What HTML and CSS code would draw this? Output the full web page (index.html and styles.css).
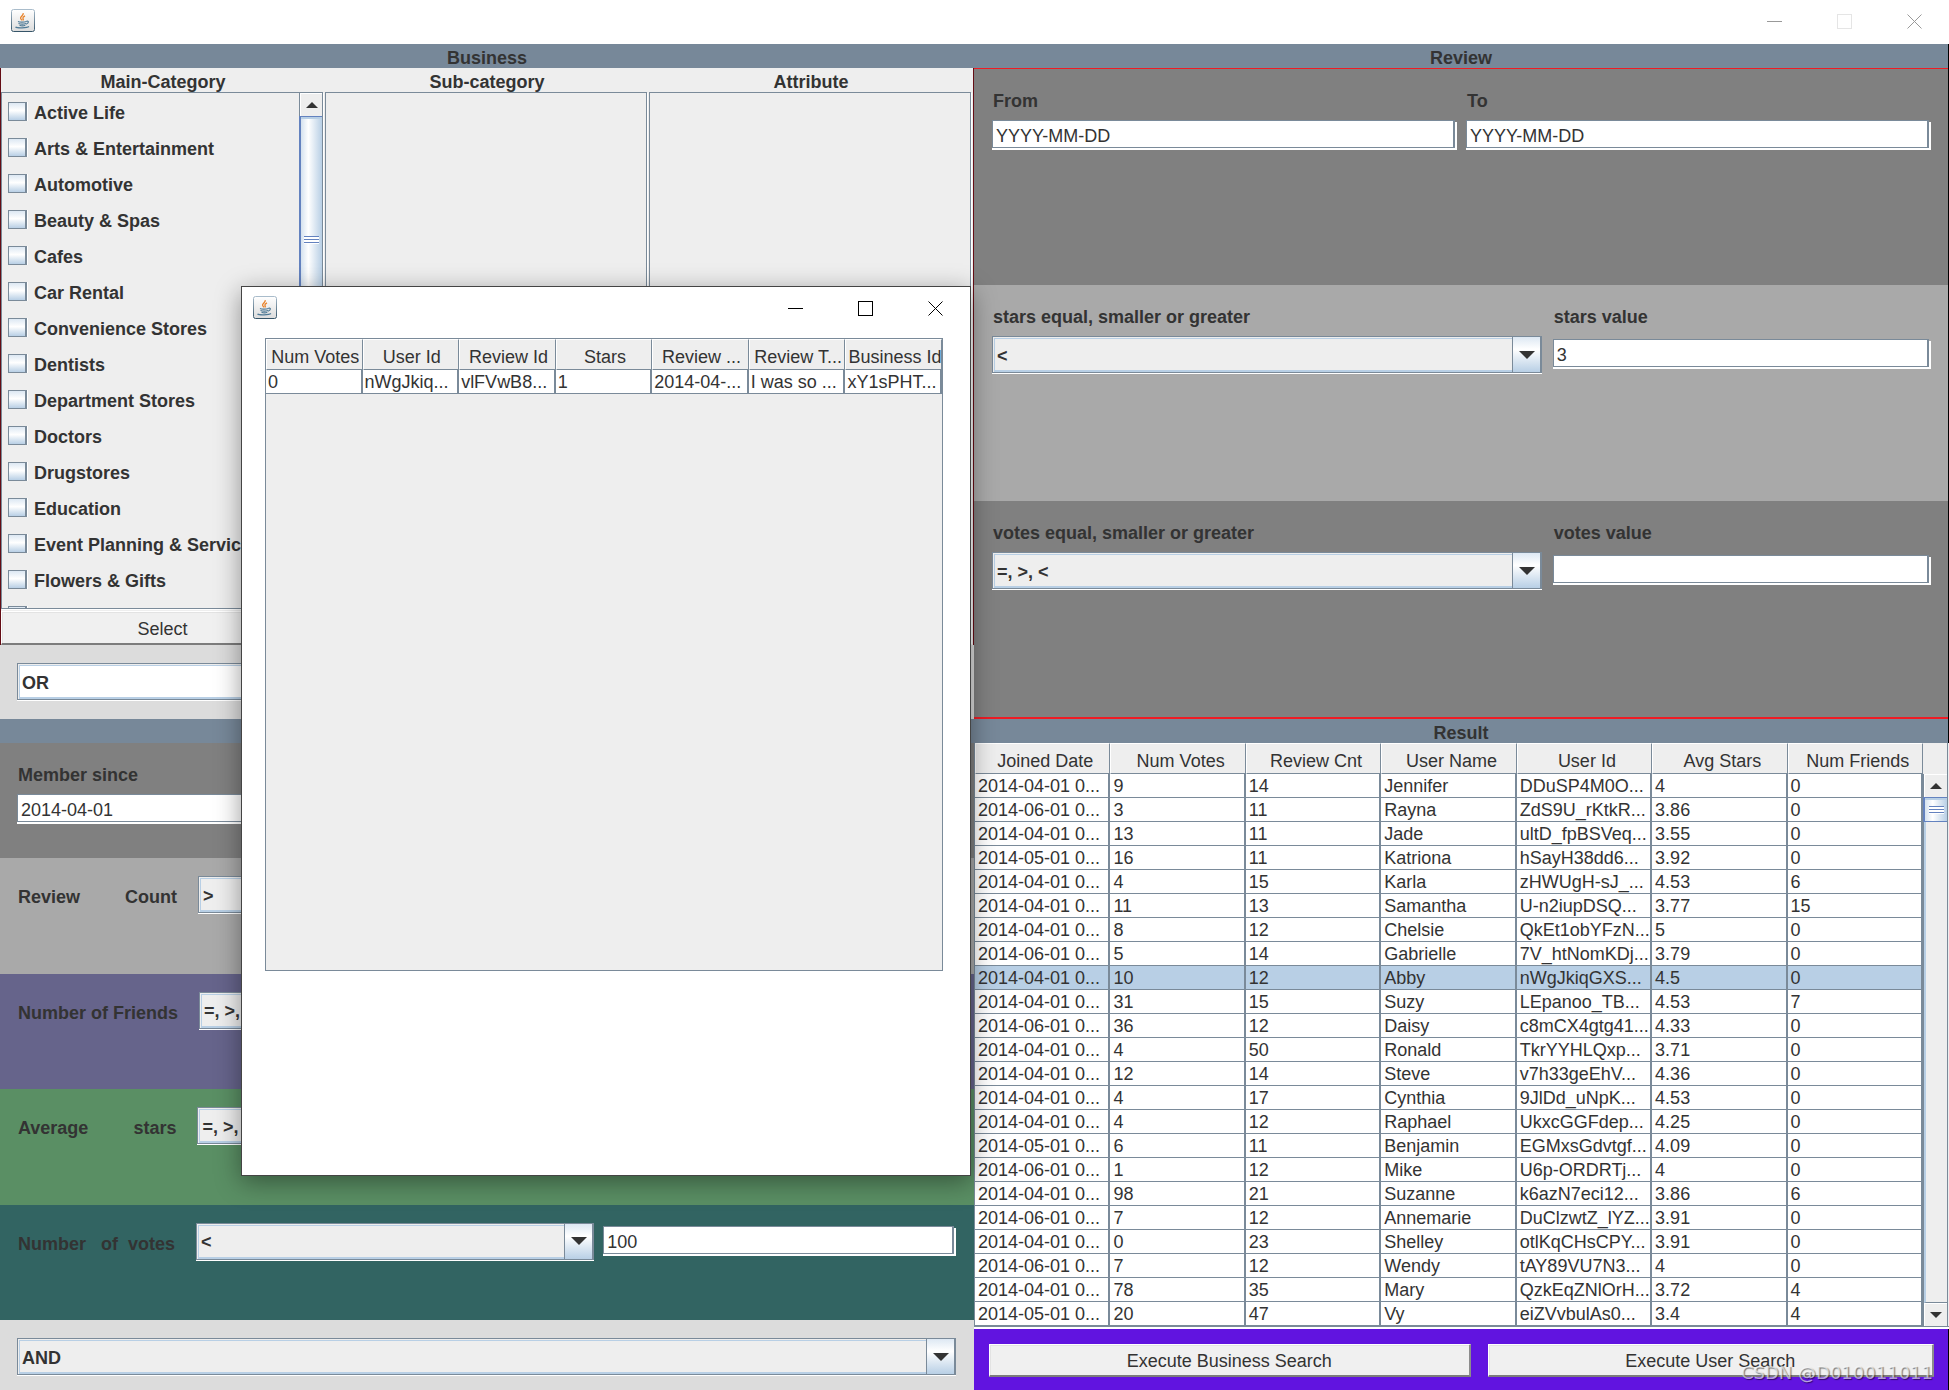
FILE: index.html
```html
<!DOCTYPE html>
<html lang="en">
<head>
<meta charset="utf-8">
<title>Search</title>
<link rel="stylesheet" href="styles.css">
</head>
<body>
<svg width="0" height="0" class="defs" aria-hidden="true">
  <defs>
    <linearGradient id="jbg" x1="0" y1="0" x2="0" y2="1"><stop offset="0" stop-color="#ffffff"/><stop offset="1" stop-color="#dcdcdc"/></linearGradient>
    <linearGradient id="jedge" x1="0" y1="0" x2="0" y2="1"><stop offset="0" stop-color="#a9bccb"/><stop offset="1" stop-color="#365569"/></linearGradient>
    <symbol id="java" viewBox="0 0 24 24">
      <rect x="0.5" y="0.5" width="23" height="22" rx="2" fill="url(#jbg)" stroke="url(#jedge)"/>
      <path d="M12.200 4.200c.5 2.400-3 3-2.600 5 .1.9 1 1.500 1.600 2.200M14 6.800c-1.600.8-2.400 1.500-2.100 2.400.2.7.9 1 .1 2.200" fill="none" stroke="#e8822a" stroke-width="1.300"/>
      <path d="M7 12.500c1.500.9 6 .9 8.500 0M7.500 14.500c2 .7 5.500.7 7.500 0M8.500 16.200c2 .8 4 .8 5.800 0M15.500 12.300c2.400-.9 2.800 1.600-.6 2.900M4.500 18c1.500 1.200 11.500 1.200 13.500-.5" fill="none" stroke="#4f7a96" stroke-width="1.200"/>
    </symbol>
    <symbol id="min" viewBox="0 0 15 15"><path d="M0 7.500h15" stroke="currentColor"/></symbol>
    <symbol id="max" viewBox="0 0 15 15"><rect x=".5" y=".5" width="14" height="14" fill="none" stroke="currentColor"/></symbol>
    <symbol id="close" viewBox="0 0 15 15"><path d="M.5.5l14 14M14.500.5l-14 14" stroke="currentColor"/></symbol>
  </defs>
</svg>
<div class="app">
  <header class="titlebar">
    <svg class="logo" aria-hidden="true"><use href="#java"/></svg>
    <div class="controls inactive">
      <button type="button" aria-label="Minimize"><svg><use href="#min"/></svg></button>
      <button type="button" aria-label="Maximize" disabled><svg><use href="#max"/></svg></button>
      <button type="button" aria-label="Close"><svg><use href="#close"/></svg></button>
    </div>
  </header>

  <main class="panels">
    <section class="panel">
      <h2 class="bar">Business</h2>
      <div class="categories">
        <div class="category">
          <h3 class="heading">Main-Category</h3>
          <div class="pane">
            <ul class="checks">
              <li><label><input type="checkbox"><span>Active Life</span></label></li>
              <li><label><input type="checkbox"><span>Arts &amp; Entertainment</span></label></li>
              <li><label><input type="checkbox"><span>Automotive</span></label></li>
              <li><label><input type="checkbox"><span>Beauty &amp; Spas</span></label></li>
              <li><label><input type="checkbox"><span>Cafes</span></label></li>
              <li><label><input type="checkbox"><span>Car Rental</span></label></li>
              <li><label><input type="checkbox"><span>Convenience Stores</span></label></li>
              <li><label><input type="checkbox"><span>Dentists</span></label></li>
              <li><label><input type="checkbox"><span>Department Stores</span></label></li>
              <li><label><input type="checkbox"><span>Doctors</span></label></li>
              <li><label><input type="checkbox"><span>Drugstores</span></label></li>
              <li><label><input type="checkbox"><span>Education</span></label></li>
              <li><label><input type="checkbox"><span>Event Planning &amp; Services</span></label></li>
              <li><label><input type="checkbox"><span>Flowers &amp; Gifts</span></label></li>
              <li><label><input type="checkbox" aria-label="Next category"></label></li>
            </ul>
            <div class="scrollbar">
              <span class="arrow up"></span>
              <span class="thumb long"><i class="grip"></i></span>
              <span class="track"></span>
              <span class="arrow down"></span>
            </div>
          </div>
          <button type="button" class="button">Select</button>
        </div>
        <div class="category"><h3 class="heading">Sub-category</h3><div class="pane"></div></div>
        <div class="category"><h3 class="heading">Attribute</h3><div class="pane"></div></div>
      </div>
      <div class="mode tall">
        <span class="combo"><select class="white" aria-label="Category match"><option>OR</option><option>AND</option></select></span>
      </div>
    </section>

    <section class="panel framed">
      <h2 class="bar">Review</h2>
      <div class="review">
        <div class="criteria gray halves">
          <div class="field"><label for="from">From</label><input class="text" id="from" value="YYYY-MM-DD"></div>
          <div class="field"><label for="to">To</label><input class="text" id="to" value="YYYY-MM-DD"></div>
        </div>
        <div class="criteria silver">
          <div class="field"><label for="sop">stars equal, smaller or greater</label><span class="combo"><select id="sop"><option>&lt;</option></select></span></div>
          <div class="field"><label for="sval">stars value</label><div class="center"><input class="text" id="sval" value="3"></div></div>
        </div>
        <div class="criteria gray">
          <div class="field"><label for="vop">votes equal, smaller or greater</label><span class="combo"><select id="vop"><option>=, &gt;, &lt;</option></select></span></div>
          <div class="field"><label for="vval">votes value</label><div class="center"><input class="text" id="vval" value=""></div></div>
        </div>
      </div>
    </section>

    <section class="panel">
      <h2 class="bar">User</h2>
      <div class="filters">
        <div class="member gray">
          <div class="field"><label for="since">Member since</label><input class="text" id="since" value="2014-04-01"></div>
        </div>
        <div class="filter silver">
          <label for="rc">Review         Count</label><span class="combo"><select id="rc"><option>&gt;</option></select></span><input class="text" aria-label="Review count value">
        </div>
        <div class="filter violet">
          <label for="nf">Number of Friends</label><span class="combo"><select id="nf"><option>=, &gt;, &lt;</option></select></span><input class="text" aria-label="Friends value">
        </div>
        <div class="filter green">
          <label for="as">Average         stars</label><span class="combo"><select id="as"><option>=, &gt;, &lt;</option></select></span><input class="text" aria-label="Stars value">
        </div>
        <div class="filter teal">
          <label for="nv">Number   of  votes</label><span class="combo"><select id="nv"><option>&lt;</option></select></span><input class="text" aria-label="Votes value" value="100">
        </div>
      </div>
      <div class="mode">
        <span class="combo"><select aria-label="Filter match"><option>AND</option><option>OR</option></select></span>
      </div>
    </section>

    <section class="panel framed">
      <h2 class="bar">Result</h2>
      <div class="result">
        <table class="grid">
          <thead><tr><th>Joined Date</th><th>Num Votes</th><th>Review Cnt</th><th>User Name</th><th>User Id</th><th>Avg Stars</th><th>Num Friends</th></tr></thead>
          <tbody>
            <tr><td>2014-04-01 0...</td><td>9</td><td>14</td><td>Jennifer</td><td>DDuSP4M0O...</td><td>4</td><td>0</td></tr>
            <tr><td>2014-06-01 0...</td><td>3</td><td>11</td><td>Rayna</td><td>ZdS9U_rKtkR...</td><td>3.86</td><td>0</td></tr>
            <tr><td>2014-04-01 0...</td><td>13</td><td>11</td><td>Jade</td><td>ultD_fpBSVeq...</td><td>3.55</td><td>0</td></tr>
            <tr><td>2014-05-01 0...</td><td>16</td><td>11</td><td>Katriona</td><td>hSayH38dd6...</td><td>3.92</td><td>0</td></tr>
            <tr><td>2014-04-01 0...</td><td>4</td><td>15</td><td>Karla</td><td>zHWUgH-sJ_...</td><td>4.53</td><td>6</td></tr>
            <tr><td>2014-04-01 0...</td><td>11</td><td>13</td><td>Samantha</td><td>U-n2iupDSQ...</td><td>3.77</td><td>15</td></tr>
            <tr><td>2014-04-01 0...</td><td>8</td><td>12</td><td>Chelsie</td><td>QkEt1obYFzN...</td><td>5</td><td>0</td></tr>
            <tr><td>2014-06-01 0...</td><td>5</td><td>14</td><td>Gabrielle</td><td>7V_htNomKDj...</td><td>3.79</td><td>0</td></tr>
            <tr class="selected"><td>2014-04-01 0...</td><td>10</td><td>12</td><td>Abby</td><td>nWgJkiqGXS...</td><td>4.5</td><td>0</td></tr>
            <tr><td>2014-04-01 0...</td><td>31</td><td>15</td><td>Suzy</td><td>LEpanoo_TB...</td><td>4.53</td><td>7</td></tr>
            <tr><td>2014-06-01 0...</td><td>36</td><td>12</td><td>Daisy</td><td>c8mCX4gtg41...</td><td>4.33</td><td>0</td></tr>
            <tr><td>2014-04-01 0...</td><td>4</td><td>50</td><td>Ronald</td><td>TkrYYHLQxp...</td><td>3.71</td><td>0</td></tr>
            <tr><td>2014-04-01 0...</td><td>12</td><td>14</td><td>Steve</td><td>v7h33geEhV...</td><td>4.36</td><td>0</td></tr>
            <tr><td>2014-04-01 0...</td><td>4</td><td>17</td><td>Cynthia</td><td>9JlDd_uNpK...</td><td>4.53</td><td>0</td></tr>
            <tr><td>2014-04-01 0...</td><td>4</td><td>12</td><td>Raphael</td><td>UkxcGGFdep...</td><td>4.25</td><td>0</td></tr>
            <tr><td>2014-05-01 0...</td><td>6</td><td>11</td><td>Benjamin</td><td>EGMxsGdvtgf...</td><td>4.09</td><td>0</td></tr>
            <tr><td>2014-06-01 0...</td><td>1</td><td>12</td><td>Mike</td><td>U6p-ORDRTj...</td><td>4</td><td>0</td></tr>
            <tr><td>2014-04-01 0...</td><td>98</td><td>21</td><td>Suzanne</td><td>k6azN7eci12...</td><td>3.86</td><td>6</td></tr>
            <tr><td>2014-06-01 0...</td><td>7</td><td>12</td><td>Annemarie</td><td>DuClzwtZ_lYZ...</td><td>3.91</td><td>0</td></tr>
            <tr><td>2014-04-01 0...</td><td>0</td><td>23</td><td>Shelley</td><td>otlKqCHsCPY...</td><td>3.91</td><td>0</td></tr>
            <tr><td>2014-06-01 0...</td><td>7</td><td>12</td><td>Wendy</td><td>tAY89VU7N3...</td><td>4</td><td>0</td></tr>
            <tr><td>2014-04-01 0...</td><td>78</td><td>35</td><td>Mary</td><td>QzkEqZNlOrH...</td><td>3.72</td><td>4</td></tr>
            <tr><td>2014-05-01 0...</td><td>20</td><td>47</td><td>Vy</td><td>eiZVvbulAs0...</td><td>3.4</td><td>4</td></tr>
          </tbody>
        </table>
        <div class="rail">
          <span class="corner"></span>
          <div class="scrollbar">
            <span class="arrow up"></span>
            <span class="thumb"><i class="grip"></i></span>
            <span class="track"></span>
            <span class="arrow down"></span>
          </div>
        </div>
      </div>
      <div class="actions">
        <button type="button" class="button">Execute Business Search</button>
        <button type="button" class="button">Execute User Search</button>
      </div>
    </section>
  </main>

  <div class="dialog" role="dialog" aria-label="Reviews">
    <div class="titlebar">
      <svg class="logo" aria-hidden="true"><use href="#java"/></svg>
      <div class="controls">
        <button type="button" aria-label="Minimize"><svg><use href="#min"/></svg></button>
        <button type="button" aria-label="Maximize"><svg><use href="#max"/></svg></button>
        <button type="button" aria-label="Close"><svg><use href="#close"/></svg></button>
      </div>
    </div>
    <div class="reviews">
      <table class="grid">
        <thead><tr><th>Num Votes</th><th>User Id</th><th>Review Id</th><th>Stars</th><th>Review ...</th><th>Review T...</th><th>Business Id</th></tr></thead>
        <tbody><tr><td>0</td><td>nWgJkiq...</td><td>vlFVwB8...</td><td>1</td><td>2014-04-...</td><td>I was so ...</td><td>xY1sPHT...</td></tr></tbody>
      </table>
    </div>
  </div>

  <div class="watermark">CSDN @D010011011</div>
</div>
</body>
</html>
```
FILE: styles.css
```css
* { box-sizing: border-box; }

body {
  margin: 0;
  background: #fff;
  color: #333;
  font: 18px/24px "Liberation Sans", Arial, sans-serif;
}

h2, h3, ul { margin: 0; padding: 0; font-size: 18px; }
button, input, select { font: inherit; color: inherit; margin: 0; }
.defs { position: absolute; }

.app {
  position: relative;
  display: flex;
  flex-direction: column;
  height: 100vh;
  min-height: 1200px;
}

/* Window chrome */
.titlebar {
  flex: none;
  display: flex;
  align-items: center;
  justify-content: space-between;
  height: 44px;
  padding-left: 11px;
  background: #fff;
}
.logo { width: 24px; height: 24px; margin-top: -2px; }
.controls { display: flex; height: 41px; margin-top: -2px; color: #000; }
.controls button {
  width: 70px;
  border: 0;
  padding: 0;
  background: none;
  display: grid;
  place-items: center;
}
.controls svg { width: 15px; height: 15px; }
.inactive { color: #999; }
.inactive button:disabled { color: #e5e5e5; }

/* Four panels */
.panels {
  flex: 1;
  min-height: 0;
  display: grid;
  grid-template-columns: minmax(0, 1fr) minmax(0, 1fr);
  grid-template-rows: minmax(0, 1fr) auto;
  padding-right: 1px;
}
.panel { display: flex; flex-direction: column; min-width: 0; min-height: 0; }
.framed { box-shadow: 1px 0 #000; }

.bar, .heading {
  flex: none;
  height: 24px;
  padding-top: 4px;
  line-height: 20px;
  text-align: center;
}
.bar { background: #778899; }

.gray { background: #808080; }
.silver { background: #a9a9a9; }
.violet { background: #66648b; }
.green { background: #5a8f64; }
.teal { background: #326462; }

/* Business categories */
.categories {
  flex: 1;
  min-height: 0;
  display: grid;
  grid-template-columns: repeat(3, minmax(0, 1fr));
  background: #eee;
  border: solid #640c14;
  border-width: 0 1px;
}
.category { display: flex; flex-direction: column; min-height: 0; }
.pane {
  flex: 1;
  min-height: 0;
  display: flex;
  overflow: hidden;
  margin: 0 2px 2px 0;
  border: 1px solid #7a8a99;
  box-shadow: 1px 1px #fff;
}
.checks { flex: 1; list-style: none; font-weight: bold; white-space: nowrap; }
.checks label { display: flex; align-items: center; gap: 7px; height: 36px; padding-left: 6px; }
.checks span { padding-top: 3px; }
.checks input {
  appearance: none;
  width: 19px;
  height: 19px;
  border: 1px solid #7a8a99;
  border-right-width: 2px;
  background: linear-gradient(#dde8f3, #fff 45%, #b8cfe5);
  box-shadow: 1px 0 #fff;
}

.button {
  flex: 1 1 auto;
  height: 33px;
  padding: 2px 0 0;
  border: solid;
  border-width: 1px 2px 2px 1px;
  border-color: #fff #8c8c8c #7c7c7c #fff;
  background: #f0f0f0;
  box-shadow: inset 1px 1px #e3e3e3;
}
.category .button { flex: none; height: 34px; }

/* Scroll bars */
.scrollbar {
  flex: none;
  width: 23px;
  display: flex;
  flex-direction: column;
  border-left: 1px solid #7a8a99;
  background: #eee;
}
.arrow {
  height: 23px;
  display: grid;
  place-items: center;
  border-left: 1px solid #fff;
  border-top: 1px solid #fff;
}
.arrow::after {
  content: "";
  border: solid transparent;
  border-width: 0 6px 6px;
  border-bottom-color: #333;
}
.arrow.down::after { border-width: 6px 6px 0; border-top-color: #333; }
.track { flex: 1; border-left: 2px solid #b8cfe5; border-bottom: 1px solid #7a8a99; }
.thumb {
  height: 25px;
  margin-left: -1px;
  display: grid;
  place-items: center;
  border: solid #6382bf;
  border-width: 1px 0 1px 2px;
  background: linear-gradient(90deg, #d5e2ef, #fff 35%, #b8cfe5);
  box-shadow: inset 0 2px #b8cfe5;
}
.thumb.long { height: 248px; }
.grip {
  width: 15px;
  height: 8px;
  background: repeating-linear-gradient(#6382bf 0 1px, #fff 1px 3px);
}

/* Form controls */
.text {
  width: 100%;
  min-width: 0;
  height: 28px;
  padding: 5px 3px 0;
  border: solid #7a8a99;
  border-width: 1px 2px 1px 1px;
  border-radius: 0;
  background: #fff;
  box-shadow: 2px 2px #fff, 0 2px #fff;
}
.combo {
  display: grid;
  grid-template-columns: minmax(0, 1fr) 30px;
  height: 37px;
  box-shadow: 0 1px #fff;
}
.combo select {
  grid-area: 1 / 1 / 2 / 3;
  appearance: none;
  width: 100%;
  height: 37px;
  padding: 2px 30px 0 4px;
  border: 1px solid #7a8a99;
  border-radius: 0;
  background: #eee;
  box-shadow: inset 1px 1px #eee, inset 2px 2px #b8cfe5, inset -2px -2px #b8cfe5;
  font-weight: bold;
}
.combo select.white { background: #fff; }
.combo::before {
  content: "";
  grid-area: 1 / 2;
  pointer-events: none;
  z-index: 1;
  border: 1px solid #7a8a99;
  border-right-width: 2px;
  background: linear-gradient(#dde8f3, #fff 35%, #b8cfe5);
}
.combo::after {
  content: "";
  grid-area: 1 / 2;
  place-self: center;
  z-index: 1;
  pointer-events: none;
  border: solid transparent;
  border-width: 8px 8px 0;
  border-top-color: #333;
}

.mode { flex: none; height: 70px; padding: 18px 18px 0 17px; background: #dcdcdc; }
.mode.tall { height: 74px; }

.field { display: flex; flex-direction: column; gap: 7px; min-width: 0; font-weight: bold; }
.field .text { font-weight: normal; }
.field label { padding-left: 1px; }
.center { display: flex; align-items: center; height: 34px; }

/* Review criteria */
.review {
  flex: 1;
  min-height: 0;
  display: flex;
  flex-direction: column;
  border: solid #ee1c24;
  border-width: 1px 0 2px;
}
.criteria {
  flex: 1;
  display: grid;
  grid-template-columns: minmax(0, 19fr) minmax(0, 13fr);
  gap: 11px;
  padding: 20px 19px 0 18px;
  align-items: start;
}
.criteria.halves { grid-template-columns: minmax(0, 1fr) minmax(0, 1fr); }

/* User filters */
.filters { flex: 1; display: grid; grid-auto-rows: 1fr; }
.member { padding: 20px 19px 0 17px; }
.filter {
  display: flex;
  align-items: flex-start;
  padding: 18px 20px 0 18px;
}
.filter label { flex: none; padding-top: 9px; margin-right: 21px; white-space: pre; font-weight: bold; }
.filter .combo { flex: 403 1 0; margin-right: 9px; }
.filter .text { flex: 346 1 0; margin-top: 3px; }

/* Tables */
.grid { width: 100%; table-layout: fixed; border-collapse: separate; border-spacing: 0; }
.grid th {
  height: 31px;
  padding: 4px 0 0 5px;
  border: 1px solid;
  border-color: #fff #7a8a99 #7a8a99 #fff;
  background: #eee;
  font-weight: normal;
  white-space: nowrap;
  overflow: hidden;
}
.grid td {
  height: 24px;
  padding: 2px 0 0 3px;
  line-height: 21px;
  border: solid #7a8a99;
  border-width: 0 2px 1px 0;
  background: #fff;
  white-space: nowrap;
  overflow: hidden;
}
.grid .selected td { background: #b8cfe5; }

.result {
  display: flex;
  border-left: 1px solid #7a8a99;
  border-bottom: 1px solid #7a8a99;
  margin-right: -1px;
  padding-right: 1px;
  background: #eee;
  box-shadow: 0 2px #fff;
  margin-bottom: 2px;
}
.rail { flex: none; width: 25px; display: flex; flex-direction: column; border-right: 1px solid #7a8a99; }
.rail .scrollbar { flex: 1; width: 24px; }
.corner { height: 31px; background: #eee; }

.actions {
  display: flex;
  gap: 17px;
  height: 61px;
  padding: 15px 14px 0 15px;
  background: #6114e0;
}

/* Floating review window */
.dialog {
  position: absolute;
  z-index: 5;
  left: 241px;
  top: 286px;
  width: 730px;
  height: 890px;
  display: flex;
  flex-direction: column;
  border: 1px solid #444;
  background: #fff;
  box-shadow: 0 6px 24px rgba(0, 0, 0, 0.4);
}
.reviews {
  height: 633px;
  margin: 7px 27px 0 23px;
  border: 1px solid #7a8a99;
  background: #eee;
}
.reviews td, .reviews th { padding-left: 2px; }

.watermark {
  position: absolute;
  right: 16px;
  bottom: 5px;
  font-family: "DejaVu Sans", sans-serif;
  color: rgba(255, 255, 255, 0.6);
  text-shadow: 1px 1px 1px rgba(0, 0, 0, 0.5);
  pointer-events: none;
}
```
